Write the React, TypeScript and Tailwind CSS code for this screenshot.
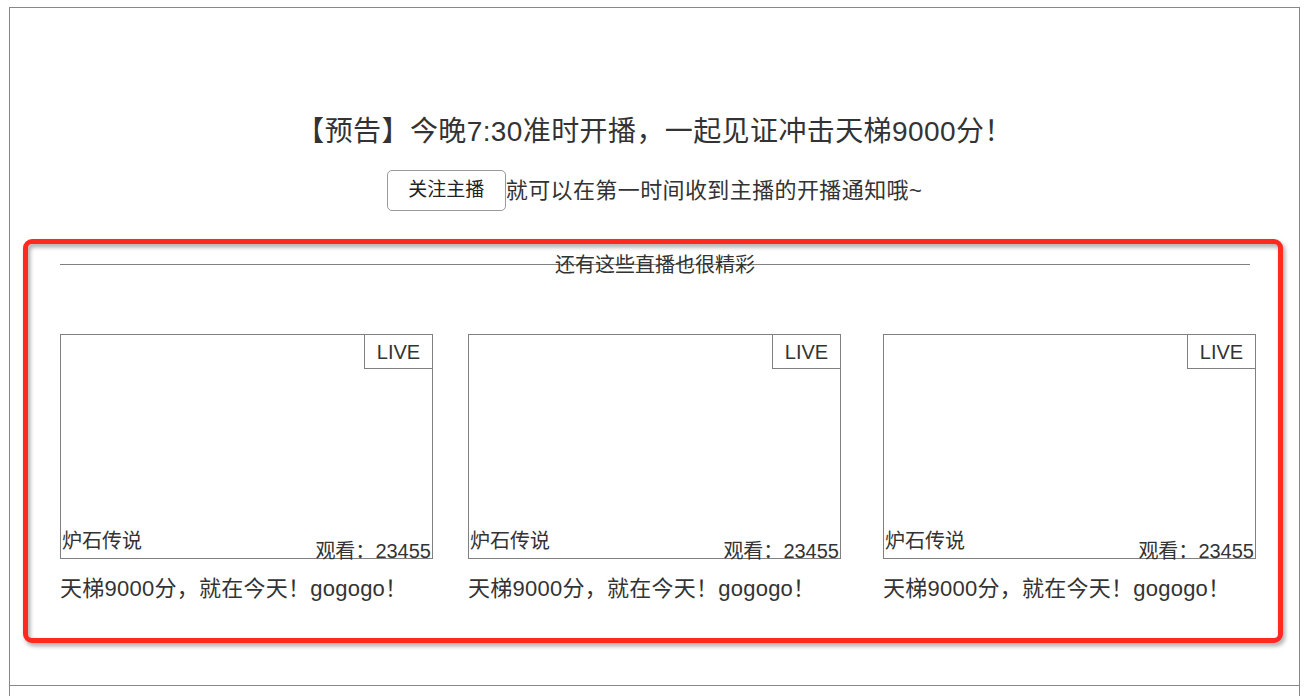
export default function App() {
  const rooms = [
    { id: 1, game: '炉石传说', views: 23455, title: '天梯9000分，就在今天！gogogo！' },
    { id: 2, game: '炉石传说', views: 23455, title: '天梯9000分，就在今天！gogogo！' },
    { id: 3, game: '炉石传说', views: 23455, title: '天梯9000分，就在今天！gogogo！' },
  ];

  return (
    <div
      className="min-h-screen bg-white pt-[7px] pl-[9px] text-[#333]"
      style={{ fontFamily: '"Liberation Sans", "Noto Sans CJK SC", sans-serif' }}
    >
      <div className="w-[1291px] border-x border-[#888]">
        {/* Notice */}
        <div className="border-y border-[#888] pb-[42px]">
          <div className="pt-[104px] text-center text-[28px] leading-[40px] tracking-[0.4px]">
            【预告】今晚7:30准时开播，一起见证冲击天梯9000分！
          </div>
          <div className="mt-[18px] flex items-center justify-center">
            <button className="h-[41px] w-[119px] rounded-[5px] border border-[#999] bg-white text-[19px] text-[#222]">
              关注主播
            </button>
            <span className="text-[22px] leading-[30px] tracking-[0.4px]">就可以在第一时间收到主播的开播通知哦~</span>
          </div>

          {/* Recommended */}
          <div className="relative ml-[13px] mt-[28px] w-[1260px] pl-[37px] pt-[11px] pb-[39px]">
            <div className="relative h-[30px] w-[1190px]">
              <div className="absolute left-0 right-0 top-[14px] h-px bg-[#808080]" />
              <div className="relative text-center text-[20px] leading-[30px]">还有这些直播也很精彩</div>
            </div>

            <div className="mt-[54px] flex">
              {rooms.map((r, i) => (
                <div key={r.id} className={i === 0 ? '' : i === 1 ? 'ml-[35px]' : 'ml-[42px]'}>
                  <div className="relative h-[225px] w-[373px] border border-[#808080]">
                    <div className="absolute right-[-1px] top-[-1px] flex h-[35px] w-[69px] items-center justify-center border border-[#808080] text-[20px]">
                      LIVE
                    </div>
                    <div className="absolute bottom-[5px] left-px text-[20px] leading-[24px]">{r.game}</div>
                    <div className="absolute bottom-[-5px] right-px text-[20px] leading-[24px]">观看：{r.views}</div>
                  </div>
                  <div className="mt-[15px] text-[22px] leading-[30px] tracking-[0.25px]">{r.title}</div>
                </div>
              ))}
            </div>

            {/* annotation frame */}
            <div className="pointer-events-none absolute inset-0 rounded-[9px] border-[5px] border-[#ff2a1f] drop-shadow-[2px_3px_2px_rgba(0,0,0,0.35)]" />
          </div>
        </div>
        <div className="h-[40px]" />
      </div>
    </div>
  );
}
